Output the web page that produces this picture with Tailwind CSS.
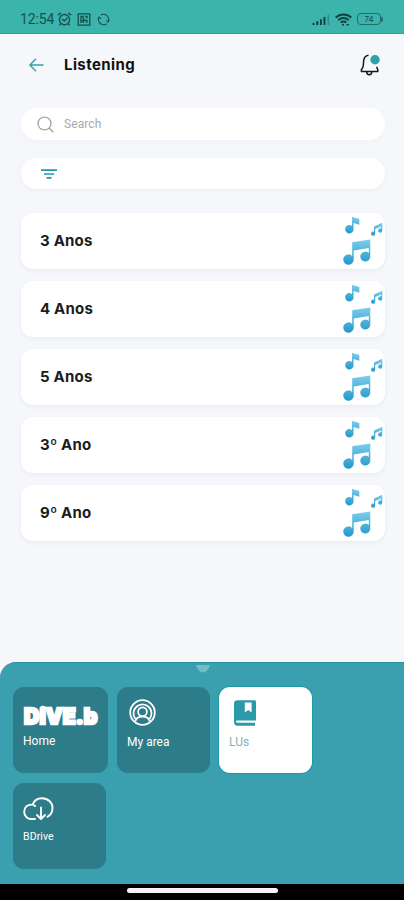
<!DOCTYPE html>
<html lang="pt">
<head>
<meta charset="utf-8">
<meta name="viewport" content="width=device-width, initial-scale=1">
<title>Listening</title>
<script src="https://cdn.jsdelivr.net/npm/@tailwindcss/browser@4"></script>
</head>
<body class="bg-[#f5f7fb] font-['Inter',sans-serif]">
<svg class="absolute h-0 w-0">
  <defs>
    <linearGradient id="blue" x1="0" y1="0" x2="0" y2="1"><stop offset="0" stop-color="#7dcdec"/><stop offset="1" stop-color="#2398cc"/></linearGradient>
  </defs>
  <symbol id="notes" viewBox="0 0 44 56">
    <g fill="url(#blue)">
      <path d="M11 3.8 18.300 6v5.700l-5.800-1.800v7a4.200 4.200 0 1 1-1.500-4z"/>
      <path d="m33 13.400 8.300-3.600v8.100a2.100 2.100 0 1 1-1.100-2.300v-2.200l-6 2.500v5.200a2.100 2.100 0 1 1-1.200-2.300z"/>
      <path d="m11.200 29.200 18.100-2.800v17.700a5 5 0 1 1-1.500-4.100v-4.900l-15.100 2.400v9.400a5.200 5.200 0 1 1-1.500-4z"/>
    </g>
  </symbol>
</svg>
<div class="flex h-[900px] w-[404px] flex-col overflow-hidden">
  <div class="flex h-[34px] shrink-0 items-center border-b border-[#20a69f] bg-[#3bb4ac] pt-[5px] pl-5 text-[#17504d]">
    <span class="w-[37px] font-['Roboto',sans-serif] text-[14px] leading-none tracking-[-0.1px]">12:54</span>
    <svg class="h-[14px] w-[15px]" viewBox="0 0 15 14" fill="none" stroke="currentColor" stroke-width="1.4"><circle cx="7.5" cy="7.6" r="5.1"/><path d="M.8 3.2 3.8.9M14.2 3.2l-3-2.3M5 7l2.3 2L10.4 6M3.4 12l-1 1.3M11.6 12l1 1.3"/></svg>
    <svg class="ml-[5px] h-[13px] w-[14px]" viewBox="0 0 14 13" fill="none" stroke="currentColor" stroke-width="1.3"><path d="M1.2.8h11.6v11.4H1.2zM4 10V3.5h2.2V6L8 7.5h2V10M8 3.5h2v2M4 8h2.5v2"/></svg>
    <svg class="ml-[6px] h-[13px] w-[13px]" viewBox="0 0 13 13" fill="none" stroke="currentColor" stroke-width="1.1"><path d="M4 1.9a5.1 5.1 0 0 1 7.3 6M9.6 10.7A5.1 5.1 0 0 1 2 4.4M1 7l1-2.8 2 1.5M12.3 6.4l-1 2.5-2-1.2"/></svg>
    <svg class="ml-auto h-[11px] w-[18px]" viewBox="0 0 18 11" fill="#123f3d"><path d="M.5 9h2v2h-2zM4.3 7.2h2V11h-2zM8 5.2h1.8V11H8zM11.5 3h1.9v8h-1.9z"/><path d="M15.5.5h1.7V11h-1.7z" opacity=".3"/></svg>
    <svg class="ml-[5px] h-[13px] w-[17px]" viewBox="0 0 17 13" fill="none" stroke="#123f3d" stroke-width="1.9"><path d="M.7 4.5C5 .4 12 .4 16.3 4.5M3.2 7.1c3-2.8 7.6-2.8 10.6 0M5.7 9.5c1.8-1.4 3.8-1.4 5.6 0"/><path d="M7 11.7h2M11.5 11.8h2.3" stroke-width="1.6"/></svg>
    <div class="ml-[5px] flex h-[12px] w-[24px] items-center justify-center rounded-[4px] border border-[#216d68] text-[8px] leading-none">74</div>
    <div class="mr-[21px] h-[5px] w-[2px] rounded-r bg-[#216d68]"></div>
  </div>

  <header class="flex h-[62px] shrink-0 items-center pr-[24px] pl-[29px]">
    <svg class="h-[14px] w-[15px]" viewBox="0 0 15 14" fill="none" stroke="#36a3ac" stroke-width="1.5" stroke-linecap="round" stroke-linejoin="round"><path d="M14 7H1M6.5 1.3.9 7l5.6 5.7"/></svg>
    <h1 class="ml-[20px] text-[15px] font-bold tracking-[0.400px] text-[#111]">Listening</h1>
    <svg class="ml-auto h-[24px] w-[22px]" viewBox="0 0 22 24" fill="none" stroke="#15181a" stroke-width="1.5" stroke-linejoin="round"><path d="M10.500 2.300C7 2.600 5.600 6 5.500 9.300c0 4-.500 5.900-2.100 7.300v1.900h16.400v-1.900c-.500-.700-.900-1.600-1-2.800M8.700 19c.100 3.600 5 3.600 5.100 0"/><circle cx="17" cy="6.700" r="4.700" fill="#2da2ad" stroke="none"/></svg>
  </header>

  <main class="flex flex-col pt-[12px] pr-[19px] pl-[21px]">
    <div class="flex h-[32px] items-center rounded-full bg-white pl-[16px] shadow-[0_2px_4px_rgba(70,80,110,0.03)]">
      <svg class="h-[17px] w-[17px]" viewBox="0 0 17 17" fill="none" stroke="#9b9b9d" stroke-width="1.2"><circle cx="7.5" cy="7.5" r="6.5"/><path d="m12 12 4.3 4.2"/></svg>
      <span class="ml-[10px] font-['Roboto',sans-serif] text-[12px] tracking-[0.100px] text-[#a9a9ad]">Search</span>
    </div>
    <div class="mt-[18px] flex h-[31px] items-center rounded-full bg-white pl-[20px] shadow-[0_2px_4px_rgba(70,80,110,0.05)]">
      <svg class="h-[10px] w-[16px]" viewBox="0 0 16 10" fill="none" stroke="#2596ab" stroke-width="1.7"><path d="M0 1.2h16M3 5h10M5.5 8.8h5"/></svg>
    </div>
    <div class="mt-[24px] flex flex-col gap-[12px] text-[15px] font-bold tracking-[0.200px] text-[#1c1c1d]">
      <div class="flex h-[56px] items-center justify-between rounded-[12px] bg-white pl-[19px] shadow-[0_2px_4px_rgba(70,80,110,0.07)]"><span class="pt-px">3 Anos</span><svg class="h-[56px] w-[44px]"><use href="#notes"/></svg></div>
      <div class="flex h-[56px] items-center justify-between rounded-[12px] bg-white pl-[19px] shadow-[0_2px_4px_rgba(70,80,110,0.07)]"><span class="pt-px">4 Anos</span><svg class="h-[56px] w-[44px]"><use href="#notes"/></svg></div>
      <div class="flex h-[56px] items-center justify-between rounded-[12px] bg-white pl-[19px] shadow-[0_2px_4px_rgba(70,80,110,0.07)]"><span class="pt-px">5 Anos</span><svg class="h-[56px] w-[44px]"><use href="#notes"/></svg></div>
      <div class="flex h-[56px] items-center justify-between rounded-[12px] bg-white pl-[19px] shadow-[0_2px_4px_rgba(70,80,110,0.07)]"><span class="pt-px">3º Ano</span><svg class="h-[56px] w-[44px]"><use href="#notes"/></svg></div>
      <div class="flex h-[56px] items-center justify-between rounded-[12px] bg-white pl-[19px] shadow-[0_2px_4px_rgba(70,80,110,0.07)]"><span class="pt-px">9º Ano</span><svg class="h-[56px] w-[44px]"><use href="#notes"/></svg></div>
    </div>
  </main>

  <nav class="mt-auto flex h-[222px] shrink-0 flex-col rounded-tl-[16px] border-t border-[#278f9b] bg-[#3a9fae] pl-[13px] font-['Roboto',sans-serif] text-[12px] leading-[14px] text-white">
    <div class="flex h-[24px] justify-center pt-[2px] pr-[11px]">
      <svg class="h-[8px] w-[14px]" viewBox="0 0 14 8" fill="#71bdc8"><path d="M0 0h14c-1 4-4 7.500-7 7.500S1 4 0 0z"/></svg>
    </div>
    <div class="flex">
      <div class="flex h-[86px] w-[95px] flex-col rounded-[11px] bg-[#2d7c8a] pl-[10px]">
        <div class="mt-[17px] h-[25px] pl-px font-['Inter',sans-serif] text-[21px] leading-[25px] font-black tracking-[0.200px] whitespace-nowrap [-webkit-text-stroke:2.4px_white]">DiVE.b</div>
        <span class="mt-[5px]">Home</span>
      </div>
      <div class="ml-[9px] flex h-[86px] w-[93px] flex-col rounded-[11px] bg-[#2d7c8a] pl-[10px]">
        <svg class="mt-[12px] ml-[2px] h-[27px] w-[27px]" viewBox="0 0 27 27" fill="none" stroke="white" stroke-width="1.800"><circle cx="13.500" cy="13.500" r="12.300"/><path d="M6.300 19.800A9 9 0 1 1 20.700 19.800M6.400 22.300c.600-3.200 3-4.600 7.100-4.600s6.500 1.400 7.100 4.600"/><circle cx="13.500" cy="12.800" r="4.400"/></svg>
        <span class="mt-[9px] text-[12px]">My area</span>
      </div>
      <div class="ml-[9px] flex h-[86px] w-[93px] flex-col rounded-[11px] bg-white pl-[10px] text-[#7fb3b8] shadow-[0_0_0_1px_#1c98a6]">
        <svg class="mt-[13px] ml-[5px] h-[26px] w-[22px]" viewBox="0 0 22 26" fill="#2a9aa9"><path fill-rule="evenodd" d="M3.500.300H20.500a1.500 1.500 0 0 1 1.500 1.500V20.500H4c-1.200 0-2 .300-2 1.100s.800 1.200 2 1.200h17V25.700H3.500C1.300 25.700 0 24.300 0 22V3.500C0 1.500 1.500.300 3.500.300zM10.800 2.500v10l3.400-2.500 3.400 2.500v-10z"/></svg>
        <span class="mt-[9px]">LUs</span>
      </div>
    </div>
    <div class="mt-[10px] flex h-[86px] w-[93px] flex-col rounded-[11px] bg-[#2d7c8a] pl-[10px]">
      <svg class="mt-[14px] h-[24px] w-[31px]" viewBox="0 0 31 24" fill="none" stroke="white" stroke-width="1.900" stroke-linecap="round" stroke-linejoin="round"><path d="M12 22H8.500C4 22 1.200 18.600 1.200 14.600 1.200 10.200 4.500 7.500 8.600 7.600c1.700 0 2.800.600 3.500 1.500M9.700 7.500C11 3.600 14.500 1.200 19 1.200c6 0 10.500 4.300 10.500 9.800 0 3.800-1.700 6.900-5 8.800M18 10.500v11M14 18l4 4 4-4"/></svg>
      <span class="mt-[9px] text-[10.500px] tracking-[0.100px]">BDrive</span>
    </div>
  </nav>
  <div class="flex h-[16px] shrink-0 justify-center bg-black pt-[4px]"><div class="h-[5px] w-[151px] rounded-full bg-[#f5f5f5]"></div></div>
</div>
</body>
</html>
